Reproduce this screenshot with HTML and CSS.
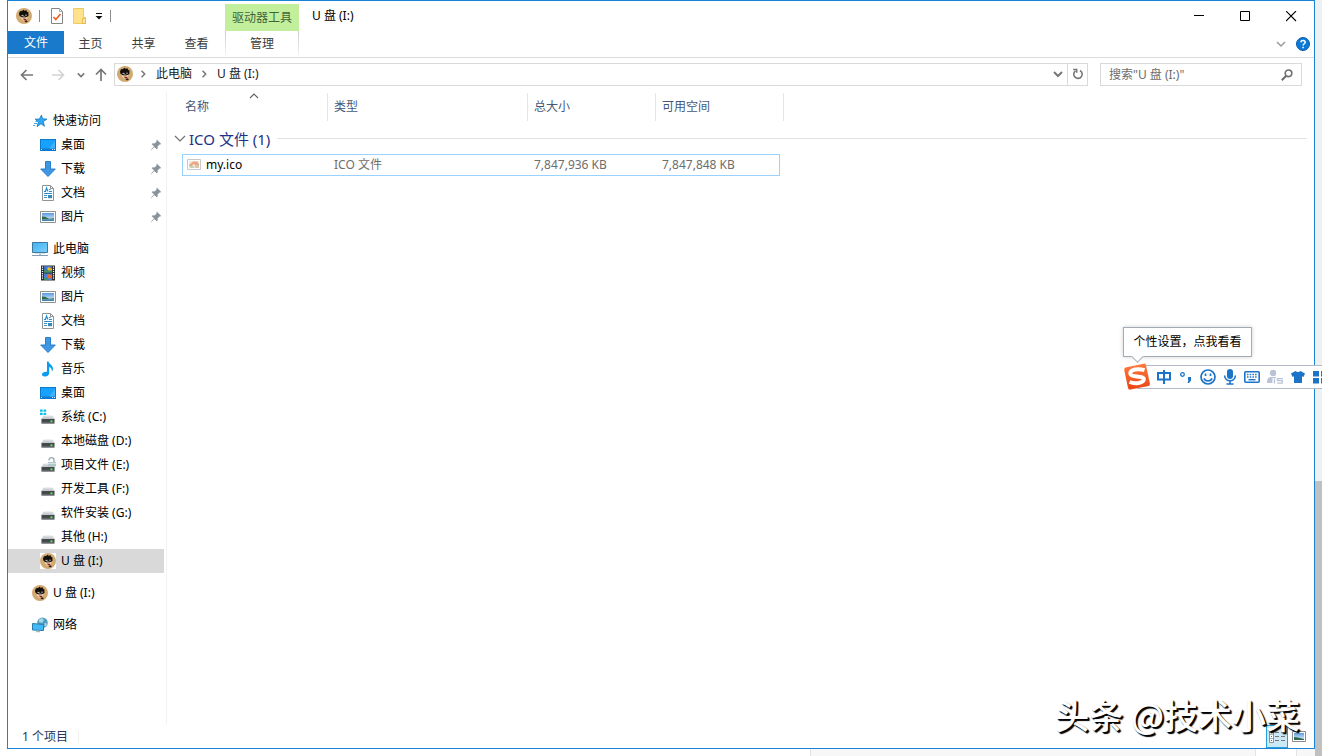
FILE: index.html
```
<!DOCTYPE html>
<html lang="zh-CN">
<head>
<meta charset="utf-8">
<title>U 盘 (I:)</title>
<link rel="stylesheet" href="styles.css">
</head>
<body>
<svg class="defs" aria-hidden="true">
  <linearGradient id="g-sky" x1="0" y1="0" x2="0" y2="1"><stop offset="0" stop-color="#5b9be0"/><stop offset="1" stop-color="#e8f4fb"/></linearGradient>
  <linearGradient id="g-screen" x1="0" y1="0" x2="1" y2="1"><stop offset="0" stop-color="#3fb2f5"/><stop offset="1" stop-color="#7fd0fb"/></linearGradient>
  <linearGradient id="g-top" x1="0" y1="0" x2="0" y2="1"><stop offset="0" stop-color="#e2e4e6"/><stop offset="1" stop-color="#b9bdc1"/></linearGradient>
  <linearGradient id="g-sogou" x1="0" y1="0" x2="0" y2="1"><stop offset="0" stop-color="#ff7a3c"/><stop offset="1" stop-color="#ee4414"/></linearGradient>
  <symbol id="avatar" viewBox="0 0 16 16"><circle cx="8" cy="8" r="8" fill="#d2a970"/><path d="M4.300 7l.7 3.500 2.500 2.500 3.300-.7 1.200-5.300z" fill="#e6cda8"/><path d="M3 5.500L4 3.300 6 3l1.500-1.300 1 1 2-.4.5 1.500 1.700 1-.4 1.200.3 1.500-1 1H5L3.300 7.500z" fill="#120e0c"/><path d="M4.500 8.200l3 1M8.500 9.200l3-1.200" stroke="#120e0c" stroke-width="1"/><path d="M5.500 7.400h2M9.300 7.200h1.500" stroke="#fff" stroke-width=".8"/><path d="M7 10.500l3.500.5-.5 1.500-2-.3z" fill="#8e2020"/><path d="M8.500 13.300l2-1 1.500 1.200-2 1z" fill="#2c211b"/></symbol>
  <symbol id="star" viewBox="0 0 16 16"><path d="M9.500 2l1 3.800 4.500.3-3.600 2.500 1 4.700-3.400-2.600-4 3 1.400-4.600L3 6.200l4.400-.2z" fill="#2ea8f2" stroke="#1679bf" stroke-width=".8"/><path d="M3.500 8.500h2M2 10.500h3M1 12.500h2" stroke="#49a5df"/></symbol>
  <symbol id="desktop" viewBox="0 0 16 16"><path d="M0 2h16v12H0z" fill="#0d78cc"/><path d="M1 3h14v8.500H1z" fill="#18a2ff"/><path d="M9 11.500L15 4v7.500z" fill="#3db2ff"/><path d="M1 12.500h1m10 0h1m1 0h1" stroke="#cceaff"/></symbol>
  <symbol id="down" viewBox="0 0 16 16"><path d="M5.500.5h5v7.500h4.800L8 15.500.7 8h4.800z" fill="#3e96e4" stroke="#2a7dc9"/></symbol>
  <symbol id="doc" viewBox="0 0 16 16"><path d="M2.500.5h8l3 3v12h-11z" fill="#fff" stroke="#8d9296"/><path d="M10.500.5v3h3" fill="none" stroke="#8d9296"/><path d="M4 6.500h1.500L6.500 3 8 6.500M9 4.500h1.500M9 6.500h3M4 8.500h8" fill="none" stroke="#1d8fd2" stroke-width="1.200"/><path d="M4 10.500h3M4 12.500h3" stroke="#3f8fc0"/><path d="M8 10h4v3.200H8z" fill="#3a86b4"/></symbol>
  <symbol id="picture" viewBox="0 0 16 16"><path d="M.5 2.500h15v11H.5z" fill="#fff" stroke="#929292"/><path d="M2 4h12v8H2z" fill="url(#g-sky)"/><path d="M2 7.500l3 .2 4 2 5-.4v1.200H2z" fill="#2e6950"/><path d="M2 10.500h12V12H2z" fill="#3e86b0"/></symbol>
  <symbol id="pc" viewBox="0 0 16 16"><path d="M.5 1.500h15v10H.5z" fill="url(#g-screen)" stroke="#3f7898"/><path d="M7 12h2v2H7z" fill="#aac4d0"/><path d="M3 12.500h10" stroke="#d5e4ea"/><path d="M0 14.500h16" stroke="#849faf"/></symbol>
  <symbol id="film" viewBox="0 0 16 16"><path d="M1 .5h14v15H1z" fill="#29292b"/><path d="M4 1h8v6.500H4z" fill="#3f74c4"/><path d="M4 8.500h8V15H4z" fill="#4a7fd6"/><path d="M7 3l2-1 3 2v1.500H8z" fill="#f0b921"/><path d="M4 5.500l4 .5 4-.5v2H4z" fill="#3d9a4b"/><path d="M8 9l4 1.500v2L9 14l-2-3z" fill="#ee6a2c"/><path d="M4 13l4 1v1H4z" fill="#3d9a4b"/><path d="M2.500 1.500v13M13.500 1.500v13" stroke="#fff" stroke-width="1.200" stroke-dasharray="1.200 1"/></symbol>
  <symbol id="music" viewBox="0 0 16 16"><path d="M7 .5h1.500c.5 2.800 4.500 3.800 4.500 7 0 1.500-.7 2.500-1.200 3 .3-2.500-1-3.800-2.600-4.400V12c0 2-1.700 3.300-3.800 3.500C3.200 15.700 2 14.700 2 13.500c0-1.700 2-2.800 5-2.700z" fill="#0a9cf0"/></symbol>
  <symbol id="drive" viewBox="0 0 16 16"><path d="M3.500 6.500h9l2.500 4H1z" fill="url(#g-top)"/><path d="M1.500 10h13v4.500h-13z" fill="#46494c"/><path d="M1.500 13.500h13v1h-13z" fill="#7d8184"/><path d="M10.500 11.500h2v1.500h-2z" fill="#4dff56"/></symbol>
  <symbol id="sysdrive" viewBox="0 0 16 16"><use href="#drive"/><path d="M0 .5h2.700v2.300H0zM3.500.5h2.700v2.300H3.500zM0 3.700h2.700V6H0zM3.500 3.700h2.700V6H3.500z" fill="#18bde9"/></symbol>
  <symbol id="lockdrive" viewBox="0 0 16 16"><use href="#drive"/><path d="M9 3.500V3c0-1 1-2.300 2.500-2.300S14 2 14 3v3" fill="none" stroke="#94a7b0" stroke-width="1.300"/><path d="M8 5h8v4.500H8z" fill="#b4c6cd"/><path d="M8 6.500h8" stroke="#d8e3e8"/></symbol>
  <symbol id="network" viewBox="0 0 16 16"><circle cx="10.500" cy="5.800" r="5.300" fill="#4f9dc2"/><path d="M7 2.500l3-1.500 2 2-2 3-3-1zM12.500 6l2.500.5-1 3-1.500-.5z" fill="#a9d6e2"/><path d="M.5 6.500l11 1v6l-11-.5z" fill="#43b9fa" stroke="#2a7da8"/><path d="M5 13.500l3 .2v1.500H3.500z" fill="#9eb7c3"/></symbol>
  <symbol id="pin" viewBox="0 0 12 12"><path d="M7 .8L11.200 5l-1 .6-.7-.1-1.900 2 .1 2-1 .8-2.400-2.400L1 11.200.8 11 4 7.300 1.800 5.200l.8-1 2 .2L6.600 2.500 6.400 1.500z" fill="#89939a"/></symbol>
  <symbol id="chev" viewBox="0 0 10 10"><path d="M1 3l4 4 4-4" fill="none" stroke="currentColor" stroke-width="1.500"/></symbol>
  <symbol id="chev-thick" viewBox="0 0 10 10"><path d="M1 3l4 4 4-4" fill="none" stroke="currentColor" stroke-width="2"/></symbol>
  <symbol id="chev-r" viewBox="0 0 10 10"><path d="M3.500 1.800L6.700 5 3.500 8.200" fill="none" stroke="currentColor" stroke-width="1.500"/></symbol>
  <symbol id="arrow" viewBox="0 0 14 14"><path d="M13 7H2M6.500 2L1.500 7l5 5" fill="none" stroke="currentColor" stroke-width="1.700"/></symbol>
</svg>

<main class="window">
  <header class="ribbon">
    <div class="quick">
      <svg class="i16"><use href="#avatar"/></svg>
      <span class="bar"></span>
      <button class="plain" aria-label="属性"><svg class="i16" viewBox="0 0 16 16"><path d="M2.500.5h8l3 3v12h-11z" fill="#fff" stroke="#858585"/><path d="M10.500.5v3h3" fill="none" stroke="#aaa"/><path d="M4.500 9l2.300 2.500L11.500 6" fill="none" stroke="#e8622b" stroke-width="1.700"/></svg></button>
      <button class="plain" aria-label="新建文件夹"><svg class="i16" viewBox="0 0 16 16"><path d="M1.500.5h10v9h2v6h-12z" fill="#ffe28a" stroke="#edcb63"/><path d="M10.500 10.500h3v5h-3z" fill="#ffe9a5" stroke="#e4bc4d"/></svg></button>
      <button class="plain" aria-label="自定义快速访问工具栏"><svg class="i8" viewBox="0 0 8 8"><path d="M1 1.500h6" stroke="#111"/><path d="M.5 4h7L4 7.500z" fill="#111"/></svg></button>
      <span class="bar"></span>
    </div>
    <div class="context">驱动器工具</div>
    <div class="titlebar">
      <h1 class="title">U 盘 (I:)</h1>
      <button class="ctl" aria-label="最小化"><svg viewBox="0 0 11 11"><path d="M0 4.500h10" stroke="#000"/></svg></button>
      <button class="ctl" aria-label="最大化"><svg viewBox="0 0 11 11"><path d="M.5.5h9v9h-9z" fill="none" stroke="#000"/></svg></button>
      <button class="ctl" aria-label="关闭"><svg viewBox="0 0 11 11"><path d="M0 0l10 10M10 0L0 10" stroke="#000" stroke-width="1.100"/></svg></button>
    </div>
    <nav class="tabs">
      <button class="tab file">文件</button>
      <button class="tab">主页</button>
      <button class="tab">共享</button>
      <button class="tab">查看</button>
    </nav>
    <button class="tab manage">管理</button>
    <div class="help">
      <button class="plain light" aria-label="展开功能区"><svg class="i10"><use href="#chev"/></svg></button>
      <button class="plain" aria-label="帮助"><svg class="i14" viewBox="0 0 14 14"><circle cx="7" cy="7" r="6.500" fill="#0c7ad8" stroke="#0b5da8"/><path d="M4.900 5.300c0-2.500 4.300-2.500 4.300 0 0 1.400-2.100 1.500-2.100 3.200M7.100 9.700v1.500" fill="none" stroke="#fff" stroke-width="1.500"/></svg></button>
    </div>
  </header>

  <div class="location">
    <div class="history">
      <button class="plain" aria-label="后退"><svg class="i14"><use href="#arrow"/></svg></button>
      <button class="plain off" aria-label="前进"><svg class="i14 flip"><use href="#arrow"/></svg></button>
      <button class="plain" aria-label="最近浏览的位置"><svg class="i8"><use href="#chev-thick"/></svg></button>
      <button class="plain" aria-label="上移"><svg class="i14 up"><use href="#arrow"/></svg></button>
    </div>
    <div class="address">
      <svg class="i16"><use href="#avatar"/></svg>
      <svg class="i10"><use href="#chev-r"/></svg>
      <a class="crumb" href="#">此电脑</a>
      <svg class="i10"><use href="#chev-r"/></svg>
      <a class="crumb" href="#">U 盘 (I:)</a>
      <button class="plain drop" aria-label="以前的位置"><svg class="i10"><use href="#chev-thick"/></svg></button>
      <button class="plain refresh" aria-label="刷新"><svg class="i12" viewBox="0 0 12 12"><path d="M8 2.500a4.200 4.200 0 1 1-4.500.3" fill="none" stroke="currentColor" stroke-width="1.600"/><path d="M4.700.8v4M1.200 1.500h4.200" stroke="currentColor" stroke-width="1.500"/></svg></button>
    </div>
    <label class="search">
      <input type="text" placeholder="搜索&quot;U 盘 (I:)&quot;" aria-label="搜索">
      <svg class="i12" viewBox="0 0 12 12"><circle cx="7.500" cy="4.300" r="3.300" fill="none" stroke="currentColor" stroke-width="1.600"/><path d="M5.200 6.700L.8 11.200" stroke="currentColor" stroke-width="2"/></svg>
    </label>
  </div>

  <div class="content">
    <nav class="tree">
      <section>
        <a class="node root" href="#"><svg class="i16"><use href="#star"/></svg>快速访问</a>
        <a class="node" href="#"><svg class="i16"><use href="#desktop"/></svg>桌面<svg class="pin"><use href="#pin"/></svg></a>
        <a class="node" href="#"><svg class="i16"><use href="#down"/></svg>下载<svg class="pin"><use href="#pin"/></svg></a>
        <a class="node" href="#"><svg class="i16"><use href="#doc"/></svg>文档<svg class="pin"><use href="#pin"/></svg></a>
        <a class="node" href="#"><svg class="i16"><use href="#picture"/></svg>图片<svg class="pin"><use href="#pin"/></svg></a>
      </section>
      <section>
        <a class="node root" href="#"><svg class="i16"><use href="#pc"/></svg>此电脑</a>
        <a class="node" href="#"><svg class="i16"><use href="#film"/></svg>视频</a>
        <a class="node" href="#"><svg class="i16"><use href="#picture"/></svg>图片</a>
        <a class="node" href="#"><svg class="i16"><use href="#doc"/></svg>文档</a>
        <a class="node" href="#"><svg class="i16"><use href="#down"/></svg>下载</a>
        <a class="node" href="#"><svg class="i16"><use href="#music"/></svg>音乐</a>
        <a class="node" href="#"><svg class="i16"><use href="#desktop"/></svg>桌面</a>
        <a class="node" href="#"><svg class="i16"><use href="#sysdrive"/></svg>系统 (C:)</a>
        <a class="node" href="#"><svg class="i16"><use href="#drive"/></svg>本地磁盘 (D:)</a>
        <a class="node" href="#"><svg class="i16"><use href="#lockdrive"/></svg>项目文件 (E:)</a>
        <a class="node" href="#"><svg class="i16"><use href="#drive"/></svg>开发工具 (F:)</a>
        <a class="node" href="#"><svg class="i16"><use href="#drive"/></svg>软件安装 (G:)</a>
        <a class="node" href="#"><svg class="i16"><use href="#drive"/></svg>其他 (H:)</a>
        <a class="node selected" href="#"><svg class="i16 boxed"><use href="#avatar"/></svg>U 盘 (I:)</a>
      </section>
      <section>
        <a class="node root" href="#"><svg class="i16"><use href="#avatar"/></svg>U 盘 (I:)</a>
      </section>
      <section>
        <a class="node root" href="#"><svg class="i16"><use href="#network"/></svg>网络</a>
      </section>
    </nav>

    <div class="files">
      <table class="list">
        <colgroup><col class="c-name"><col class="c-type"><col class="c-size"><col class="c-size"><col></colgroup>
        <thead>
          <tr>
            <th class="sorted"><svg class="i10 sort" viewBox="0 0 10 10"><path d="M1 3l4 4 4-4" fill="none" stroke="currentColor" stroke-width="1.100"/></svg>名称</th>
            <th>类型</th><th>总大小</th><th>可用空间</th><td></td>
          </tr>
        </thead>
        <tbody>
          <tr>
            <th class="group" colspan="5"><button class="plain toggle"><svg class="i12" viewBox="0 0 12 12"><path d="M1 3l5 5 5-5" fill="none" stroke="#707070" stroke-width="1.200"/></svg>ICO 文件 (1)</button></th>
          </tr>
          <tr class="row">
            <td><div class="cell first"><svg class="thumb" viewBox="0 0 14 12"><path d="M.5.5h13v10H.5z" fill="#fdfdfd" stroke="#c9c9c9"/><path d="M2 2h10v7H2z" fill="#f4ead9"/><path d="M2 6l4-3.500h4L12 5v1H8L6.500 5 5 7H2z" fill="#e8a98a"/><path d="M3 7h4v2H3z" fill="#c4d3b8"/><path d="M9 6v3M11 6v3" stroke="#c0a090"/></svg>my.ico</div></td>
            <td><div class="cell">ICO 文件</div></td>
            <td><div class="cell">7,847,936 KB</div></td>
            <td><div class="cell last">7,847,848 KB</div></td>
            <td></td>
          </tr>
        </tbody>
      </table>
    </div>
  </div>

  <footer class="status">
    <span class="count">1 个项目</span>
    <button class="view on" aria-label="详细信息"><svg viewBox="0 0 17 14"><path d="M.5.5h4v12h-4z" fill="#fff" stroke="#8a9297"/><path d="M1 4.500h3M1 8.500h3" stroke="#a9b2b7"/><path d="M2 2h1v1H2z" fill="#2f7fc6"/><path d="M2 6h1v1H2z" fill="#2f7fc6"/><path d="M2 10h1v1H2z" fill="#c9302c"/><path d="M6 2.500h4M12 2.500h4M6 6.500h4M12 6.500h4M6 10.500h4M12 10.500h4" stroke="#777"/></svg></button>
    <button class="view" aria-label="大图标"><svg class="i14" viewBox="0 0 14 12"><path d="M.5.500h13v10H.5z" fill="#fff" stroke="#8a8a8a"/><path d="M2 2h10v7H2z" fill="url(#g-sky)"/><path d="M2 6l4 .5L12 8v1H2z" fill="#2e6950"/></svg></button>
  </footer>
</main>

<div class="scroll"><span class="track"></span><span class="thumbbar"></span></div>
<div class="under"><span class="panel"><span class="slot"></span></span></div>

<div class="watermark">头条 @技术小菜</div>

<aside class="ime">
  <div class="tip">个性设置，点我看看</div>
  <div class="imebar">
    <svg class="sogou" viewBox="0 0 28 28"><path d="M2.500 4.500Q1 5 1.200 7L5 25q.5 2 2.500 1.600L25.500 23q1.800-.5 1.400-2.500L23 2q-.5-1.700-2.500-1.300z" fill="url(#g-sogou)"/><path d="M21.500 7.200C15 5 7 6.500 7.300 10.500c.2 4 13.300 1.800 13.500 5.700.2 4.200-9 4.800-14.300 2.800" fill="none" stroke="#fff" stroke-width="4"/></svg>
    <button class="plain key" aria-label="中文"><svg class="i16" viewBox="0 0 16 16"><path d="M2 4h12v6.500H2zM8 1v14" fill="none" stroke="currentColor" stroke-width="2"/></svg></button>
    <button class="plain key" aria-label="标点"><svg class="i14" viewBox="0 0 14 14"><circle cx="3.500" cy="4.500" r="1.800" fill="none" stroke="currentColor" stroke-width="1.300"/><path d="M9 7h3v3.500L10 13H8.500l1-3H9z" fill="currentColor"/></svg></button>
    <button class="plain key" aria-label="表情"><svg class="i16" viewBox="0 0 16 16"><circle cx="8" cy="8" r="7" fill="none" stroke="currentColor" stroke-width="1.700"/><path d="M5.500 4.500v2.500M10.500 4.500v2.500" stroke="currentColor" stroke-width="1.700"/><path d="M4 9.200c1 3.600 7 3.600 8 0" fill="none" stroke="currentColor" stroke-width="1.500"/></svg></button>
    <button class="plain key" aria-label="语音"><svg class="i16" viewBox="0 0 16 16"><rect x="5" y="0" width="6" height="10" rx="3" fill="currentColor"/><path d="M2.700 6.500c0 7 10.600 7 10.600 0M8 12v3M4.500 15h7" fill="none" stroke="currentColor" stroke-width="1.600"/></svg></button>
    <button class="plain key" aria-label="键盘"><svg class="i16" viewBox="0 0 16 16"><rect x=".8" y="2.800" width="14.400" height="10.400" rx="1" fill="none" stroke="currentColor" stroke-width="1.600"/><path d="M3 5.500h10M3 8h10" stroke="currentColor" stroke-width="1.500" stroke-dasharray="1.500 1.200"/><path d="M4.500 10.700h7" stroke="currentColor" stroke-width="1.400"/></svg></button>
    <button class="plain key user" aria-label="用户"><svg class="i16" viewBox="0 0 16 16"><circle cx="6" cy="4" r="3.200" fill="currentColor"/><path d="M0 14c0-7 4-6 6-6h3v1H5.500v5z" fill="currentColor"/><path d="M7.500 9.500v5M16 9.700h-5.500v2h4.700v2.500h-5" fill="none" stroke="currentColor" stroke-width="1.300"/></svg></button>
    <button class="plain key" aria-label="皮肤"><svg class="i14" viewBox="0 0 14 14"><path d="M4.500 1c1.200 1.300 3.800 1.300 5 0L14 3.500 12.500 7 11 6.300V13H3V6.300L1.500 7 0 3.500z" fill="currentColor"/></svg></button>
    <button class="plain key" aria-label="工具箱"><svg class="i14" viewBox="0 0 14 14"><path d="M0 1h6v5.500H0zM0 8h6v5.500H0zM8 8h6v5.500H8z" fill="currentColor"/><path d="M8.700 1.700h4.600v4H8.700z" fill="none" stroke="currentColor" stroke-width="1.400"/></svg></button>
  </div>
</aside>
</body>
</html>
```
FILE: styles.css
```
* { box-sizing: border-box; }

body {
  margin: 0;
  position: relative;
  height: 100vh;
  overflow: hidden;
  display: grid;
  grid-template: 1fr 7px / 7px 1fr 7px;
  background: #fff;
  color: #000;
  font: 12px/16px "Noto Sans", "Noto Sans CJK SC", sans-serif;
}

a { color: inherit; text-decoration: none; }
button, input { font: inherit; color: inherit; }
svg { display: block; flex: none; }
.defs { position: absolute; width: 0; height: 0; }
.i8 { width: 8px; height: 8px; }
.i10 { width: 10px; height: 10px; }
.i12 { width: 12px; height: 12px; }
.i14 { width: 14px; height: 14px; }
.i16 { width: 16px; height: 16px; }
.flip { transform: rotate(180deg); }
.up { transform: rotate(90deg); }

.plain {
  display: flex;
  align-items: center;
  justify-content: center;
  padding: 0;
  border: 0;
  background: none;
}

.window {
  grid-area: 1 / 2;
  display: flex;
  flex-direction: column;
  min-width: 0;
  border: 1px solid #1883d7;
  background: #fff;
}

/* Ribbon */
.ribbon {
  display: grid;
  grid-template: 30px 24px / 217px 74px 1fr;
  padding-bottom: 2px;
  border-bottom: 1px solid #dadbdc;
}
.quick { display: flex; align-items: center; gap: 7px; padding-left: 8px; }
.bar { width: 1px; height: 12px; background: #8c8c8c; }
.quick .bar + .plain { margin-left: 2px; }
.context {
  margin-top: 3px;
  background: #c1ef9b;
  color: #44643a;
  line-height: 27px;
  text-align: center;
}
.titlebar { display: flex; }
.title { flex: 1; margin: 0; padding-left: 13px; font-size: 12px; font-weight: 400; line-height: 30px; }
.ctl { display: grid; place-items: center; width: 46px; padding: 0; border: 0; background: none; }
.ctl svg { width: 11px; height: 11px; }
.tabs { display: flex; }
.tab { width: 53px; padding: 0; border: 0; background: none; color: #3b3b3b; line-height: 26px; }
.file { width: 56px; height: 23px; background: #1979ca; color: #fff; line-height: 24px; }
.manage {
  width: auto;
  border: solid;
  border-width: 0 1px;
  border-image: linear-gradient(#c8c8c8, #f4f4f4) 1;
}
.help { display: flex; align-items: center; justify-content: flex-end; gap: 10px; padding: 2px 4px 0 0; }
.light { color: #9a9a9a; }

/* Address row */
.location { display: flex; gap: 12px; padding: 5px 12px 6px 12px; }
.history { display: flex; align-items: center; justify-content: space-between; width: 88px; color: #777; }
.history .off { color: #d4d4d4; margin-left: 8px; }
.history .plain:nth-child(3) { margin-left: 4px; }
.address {
  flex: 1;
  display: flex;
  align-items: center;
  margin-left: -6px;
  padding: 0 0 1px 2px;
  height: 23px;
  border: 1px solid #d9d9d9;
  color: #777;
}
.address > .i10 { margin: 0 8px 0 5px; }
.crumb { color: #1a1a1a; }
.crumb + .i10 { margin-left: 7px; }
.drop { margin-left: auto; width: 19px; height: 21px; }
.refresh { width: 20px; height: 21px; border-left: 1px solid #d9d9d9; }
.search {
  display: flex;
  align-items: center;
  width: 202px;
  padding: 0 8px;
  border: 1px solid #d9d9d9;
  color: #6d6d6d;
}
.search input { flex: 1; min-width: 0; padding: 0; border: 0; outline: 0; background: none; }
.search input::placeholder { color: #6d6d6d; opacity: 1; }

/* Content */
.content { flex: 1; display: flex; min-height: 0; }
.tree {
  display: flex;
  flex-direction: column;
  gap: 8px;
  width: 159px;
  padding: 17px 2px 0 0;
  border-right: 1px solid #f3f3f3;
}
.node { display: flex; align-items: center; gap: 5px; height: 24px; padding: 0 2px 0 32px; }
.root { padding-left: 24px; }
.selected { background: #d9d9d9; }
.boxed { background: #fff; }
.pin { width: 12px; height: 12px; margin-left: auto; }

.files { flex: 1; min-width: 0; padding: 1px 7px 0 15px; }
.list { width: 100%; table-layout: fixed; border-spacing: 0; }
.c-name { width: 146px; }
.c-type { width: 200px; }
.c-size { width: 128px; }
.list th, .list td { padding: 0; font-weight: 400; text-align: left; }
.list thead th {
  height: 28px;
  padding-left: 6px;
  border-right: 1px solid #e5e5e5;
  color: #43597a;
}
.list thead .sorted { position: relative; padding-left: 3px; }
.sort { position: absolute; top: -2px; left: 67px; color: #606060; transform: rotate(180deg); }
.group { height: 33px; }
.toggle { width: 100%; justify-content: flex-start; gap: 3px; margin-left: -8px; padding-top: 2px; font-size: 15px; line-height: 22px; color: #1e3287; }
.list .toggle::after { content: ""; flex: 1; height: 1px; margin: 0 -8px 0 4px; background: #e2e2e2; }
.cell {
  height: 22px;
  padding-left: 6px;
  border: solid #99d1ff;
  border-width: 1px 0;
  color: #6d6d6d;
  line-height: 20px;
}
.first { display: flex; align-items: center; gap: 5px; padding-left: 4px; border-left-width: 1px; color: #000; }
.last { margin-right: 4px; border-right-width: 1px; }
.thumb { width: 14px; height: 12px; }

/* Status bar */
.status { display: flex; height: 24px; padding: 1px 4px 0 14px; color: #22355c; }
.count { align-self: center; margin-right: auto; padding-right: 10px; line-height: 12px; border-right: 1px solid #f0f0f0; }
.view { display: grid; place-items: center; width: 22px; padding: 0; border: 0; background: none; }
.view.on { border: 1px solid #26a0da; background: #cbe8f6; }
.on svg { width: 17px; height: 14px; }

/* Edges of the window behind */
.scroll { grid-area: 1 / 3 / 3 / 4; display: flex; flex-direction: column; }
.track { flex: 481; background: #f0f0f0; }
.thumbbar { flex: 275; background: #c0c0c0; }
.under { grid-area: 2 / 1 / 3 / 3; display: flex; justify-content: flex-end; }
.panel { display: flex; justify-content: flex-end; width: 505px; padding-right: 18px; background: #f7f7f7; border-left: 1px solid #e4e4e4; }
.slot { width: 42px; background: #fff; border: solid #e4e4e4; border-width: 0 1px; }

.watermark {
  position: absolute;
  right: 22px;
  bottom: 19px;
  color: #fff;
  font: 500 34px/44px "Noto Sans CJK SC", sans-serif;
  text-shadow: 1px 1px 1px #000, 2px 2px 1px #000;
  white-space: nowrap;
}

/* Input method bar */
.ime { position: absolute; top: 327px; right: -6px; width: 205px; }
.tip {
  position: relative;
  width: 129px;
  border: 1px solid #a3abb5;
  background: #fff;
  box-shadow: 0 0 4px #d0d0d0;
  line-height: 28px;
  text-align: center;
  white-space: nowrap;
}
.tip::after {
  content: "";
  position: absolute;
  left: 9px;
  bottom: -5px;
  width: 8px;
  height: 8px;
  border: solid #a3abb5;
  border-width: 0 1px 1px 0;
  background: #fff;
  transform: rotate(45deg);
}
.imebar {
  display: flex;
  align-items: center;
  height: 24px;
  margin: 8px 0 0 14px;
  border: solid #b5bac8;
  border-width: 1px 0;
  background: #fff;
  color: #1c74c8;
}
.sogou { width: 28px; height: 28px; margin: 0 2px 0 -14px; }
.key { flex: none; width: 22px; }
.user { width: 24px; color: #b9c3d8; }
```
